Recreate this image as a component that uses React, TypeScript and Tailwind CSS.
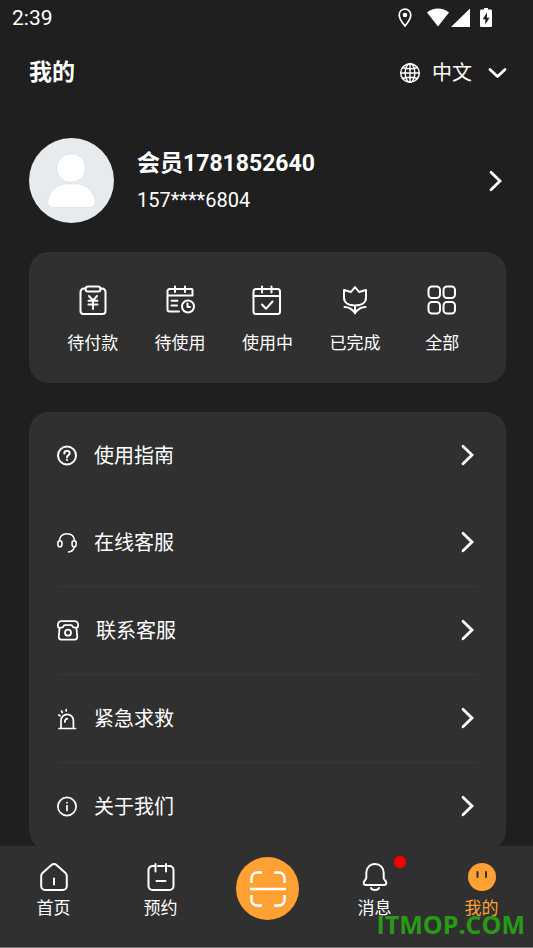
import type { ReactNode } from 'react';

const stroke = {
  fill: 'none',
  stroke: 'currentColor',
  strokeWidth: 2,
  strokeLinecap: 'round' as const,
  strokeLinejoin: 'round' as const,
  'aria-hidden': true,
};

function Chevron() {
  return (
    <svg {...stroke} width="14" height="22" viewBox="0 0 14 22" strokeWidth={2.8} strokeLinejoin="miter">
      <path d="M2 2.200 11 11l-9 8.800" />
    </svg>
  );
}

function StatusBar() {
  return (
    <div className="flex h-9 items-center justify-between pl-3 pr-[41px] text-white">
      <span className="text-[21px] leading-6">2:39</span>
      <div className="flex items-center" aria-hidden="true">
        <svg width="16" height="20" viewBox="0 0 16 20" className="mr-3.5">
          <path d="M8 1.2c-3.3 0-5.8 2.5-5.8 5.8 0 4.1 5.8 11 5.8 11s5.8-6.900 5.800-11c0-3.300-2.500-5.800-5.800-5.800Z" fill="none" stroke="#fff" strokeWidth="1.700" />
          <circle cx="8" cy="7" r="2.300" fill="#fff" />
        </svg>
        <svg width="22" height="20" viewBox="0 0 22 20" className="mr-0.5">
          <path d="M11 18.500 0 4.500C3 2 7 .5 11 .5S19 2 22 4.500Z" fill="#fff" />
        </svg>
        <svg width="19" height="20" viewBox="0 0 19 20" className="mr-2.5">
          <path d="M19 .5v18.500H0Z" fill="#fff" />
        </svg>
        <svg width="12" height="20" viewBox="0 0 12 20">
          <path d="M4 0h4v1.500h2.500c.8 0 1.500.6 1.500 1.400v14.500c0 .9-.6 1.600-1.500 1.600h-9C.6 19 0 18.300 0 17.400V2.900C0 2.100.7 1.500 1.500 1.500H4Z" fill="#fff" />
          <path d="M6.900 4.500 2.700 11.300h2.600v5.200l4.200-6.800H6.900Z" fill="#1f1f1f" />
        </svg>
      </div>
    </div>
  );
}

function GlobeIcon() {
  return (
    <svg {...stroke} width="22" height="22" viewBox="0 0 22 22" strokeWidth={1.4}>
      <circle cx="11" cy="11" r="9.300" />
      <ellipse cx="11" cy="11" rx="4.800" ry="9.300" />
      <path d="M11 1.700v18.600M1.700 11h18.600M3.500 5.500c4.500 1.500 10.500 1.500 15 0M3.500 16.500c4.500-1.500 10.500-1.500 15 0" />
    </svg>
  );
}

function Avatar() {
  return (
    <svg width="85" height="85" viewBox="0 0 85 85" role="img" aria-label="头像" className="shrink-0">
      <circle cx="42.500" cy="42.500" r="42.500" fill="#e7ebee" />
      <g fill="#fff" stroke="#d8dadb" strokeWidth="0.600">
        <circle cx="42" cy="30" r="14.300" />
        <path d="M36 46h13c9 1 16 8 17 16.500.6 5-1.500 7-6 7H25c-4.500 0-6.500-2-6-7C20 54 27 47 36 46Z" />
      </g>
    </svg>
  );
}

const orders: { label: string; icon: ReactNode }[] = [
  {
    label: '待付款',
    icon: (
      <>
        <path d="M8.500 3.500H7a3.500 3.500 0 0 0-3.500 3.500v19a3 3 0 0 0 3 3h19a3 3 0 0 0 3-3V7A3.500 3.500 0 0 0 25 3.500h-1.500" />
        <rect x="8.500" y="1.500" width="15" height="5" rx="2.500" />
        <path d="m12 11 4 4.500 4-4.500M11.500 15.800h9M11.500 19.500h9M16 15.500V24" />
      </>
    ),
  },
  {
    label: '待使用',
    icon: (
      <>
        <path d="M15 26.500H5.500a2 2 0 0 1-2-2V6a2 2 0 0 1 2-2h22a1 1 0 0 1 1 1v5.500h-25M11 1.500v5.500M21 1.500v5.500M7.500 15.800h6M7.500 20.500H13" />
        <circle cx="24" cy="21.500" r="6" />
        <path d="M23.500 18.500V22H26" />
      </>
    ),
  },
  {
    label: '使用中',
    icon: (
      <>
        <rect x="2.500" y="4" width="26.500" height="25" rx="2.500" />
        <path d="M2.500 11H29M11 1.500v6M20.500 1.500v6M11 19.500l4 4.300 6.500-7.300" />
      </>
    ),
  },
  {
    label: '已完成',
    icon: (
      <>
        <path d="m16 2 4 5 7-2v7.500C27 18 22 20.500 16 20.500S5 18 5 12.500V5l7 2ZM16 20.500V28.500M5.500 22c4.500 0 8 2.500 10.500 6 2.500-3.500 6-6 10.500-6" />
      </>
    ),
  },
  {
    label: '全部',
    icon: (
      <>
        <rect x="2.500" y="1.500" width="11.500" height="11.500" rx="3.500" />
        <rect x="17.500" y="1.500" width="11.500" height="11.500" rx="3.500" />
        <rect x="2.500" y="17" width="11.500" height="11.500" rx="3.500" />
        <rect x="17.500" y="17" width="11.500" height="11.500" rx="3.500" />
      </>
    ),
  },
];

const menu: { label: string; divided: boolean; icon: ReactNode }[] = [
  {
    label: '使用指南',
    divided: false,
    icon: (
      <svg {...stroke} width="20" height="22" viewBox="0 0 20 22">
        <circle cx="10" cy="10.500" r="9" />
        <path d="M7.300 8.500c0-3.500 5.400-3.500 5.400-.3 0 2-2.700 2-2.700 4M10 14.800v.3" />
      </svg>
    ),
  },
  {
    label: '在线客服',
    divided: false,
    icon: (
      <svg {...stroke} width="20" height="22" viewBox="0 0 20 22" strokeWidth={1.600}>
        <path d="M2.300 9C2.800 4.300 6 1.800 10 1.800S17.200 4.300 17.700 9" />
        <rect x="0.900" y="8.800" width="4" height="6" rx="2" />
        <rect x="15.100" y="8.800" width="4" height="6" rx="2" />
        <path d="M17.500 14.800c-.8 3.200-3 5-6 5.200" />
      </svg>
    ),
  },
  {
    label: '联系客服',
    divided: true,
    icon: (
      <svg {...stroke} width="22" height="22" viewBox="0 0 22 22" strokeWidth={1.800}>
        <path d="M4.500 1.200h13c2 0 3.600 1.500 3.600 3.500v1.500c0 1-.6 1.500-1.500 1.500h-2.200c-1.300 0-1.700-.8-2.200-1.800-.2-.4-.5-.7-1-.7H7.800c-.5 0-.8.3-1 .7C6.300 6.900 5.900 7.700 4.600 7.700H2.400C1.500 7.700.9 7.200.9 6.200V4.700c0-2 1.600-3.500 3.600-3.500ZM2.500 8.200l-.7 8.500c-.1 2 .7 3 2.700 3h13c2 0 2.800-1 2.700-3l-.7-8.500" />
        <circle cx="11" cy="12.700" r="3" />
      </svg>
    ),
  },
  {
    label: '紧急求救',
    divided: true,
    icon: (
      <svg {...stroke} width="20" height="22" viewBox="0 0 20 22" strokeWidth={1.700}>
        <path d="M4 20.500v-8a6.200 6.200 0 0 1 12.400 0v8M2 20.500h16.500M7.800 14c0-2 .8-3 2.500-3.400M1.800 7l1.200.8M4.500 3l.8 1.500M9.200 1.500v1.500" />
      </svg>
    ),
  },
  {
    label: '关于我们',
    divided: true,
    icon: (
      <svg {...stroke} width="20" height="22" viewBox="0 0 20 22" strokeWidth={1.700}>
        <circle cx="10" cy="10.500" r="9.100" />
        <path d="M10 9.500v5M10 6.500v.2" />
      </svg>
    ),
  },
];

function NavItem({ label, active = false, badge = false, children }: { label: string; active?: boolean; badge?: boolean; children: ReactNode }) {
  return (
    <a href="#" aria-current={active ? 'page' : undefined} className={`relative flex flex-col items-center pt-4 text-[17px] leading-6 ${active ? 'text-[#ffa033]' : 'text-white'}`}>
      <svg {...stroke} width="30" height="30" viewBox="0 0 30 30">
        {children}
      </svg>
      <span className="mt-1">{label}</span>
      {badge && <span className="absolute left-1/2 top-2.5 ml-[19px] size-3 rounded-full bg-[#ff0000]" />}
    </a>
  );
}

export default function App() {
  return (
    <div className="relative flex h-screen flex-col overflow-hidden bg-[#1f1f1f] font-[Roboto,'Noto_Sans_CJK_SC',sans-serif] text-white">
      <StatusBar />
      <main className="min-h-0 flex-1 overflow-y-auto pl-[29px] pr-[27px] [scrollbar-width:none]">
        <header className="flex h-[74px] items-center justify-between">
          <h1 className="text-[23px] font-bold leading-8">我的</h1>
          <button type="button" className="-mr-px flex items-center text-[20px] leading-8">
            <GlobeIcon />
            <span className="ml-[11px] mr-4">中文</span>
            <svg {...stroke} width="19" height="12" viewBox="0 0 19 12" strokeWidth={2.800}>
              <path d="m2 2.500 7.500 7 7.500-7" />
            </svg>
          </button>
        </header>

        <button type="button" className="mt-7 flex h-[85px] w-full items-center pr-[3px] text-left">
          <Avatar />
          <span className="ml-[23px] flex flex-1 flex-col gap-1.5">
            <span className="text-[23px] font-bold leading-8">会员1781852640</span>
            <span className="text-[20px] leading-7">157****6804</span>
          </span>
          <Chevron />
        </button>

        <section className="mt-[29px] grid grid-cols-5 rounded-[20px] bg-[#303030] px-5 pb-7 pt-[33px]">
          {orders.map((o) => (
            <a key={o.label} href="#" className="flex flex-col items-center gap-3.5 text-[17px] leading-6">
              <svg {...stroke} width="32" height="32" viewBox="0 0 32 32">
                {o.icon}
              </svg>
              {o.label}
            </a>
          ))}
        </section>

        <ul className="mt-[29px] rounded-[20px] bg-[#303030] px-7">
          {menu.map((m) => (
            <li key={m.label} className={m.divided ? 'border-t border-[#383838]' : ''}>
              <a href="#" className="flex h-[87px] items-center pr-[3px] text-[20px] leading-8">
                {m.icon}
                <span className="ml-[17px] flex-1">{m.label}</span>
                <span className="pb-0.5">
                  <Chevron />
                </span>
              </a>
            </li>
          ))}
        </ul>
      </main>

      <nav className="-mr-0.5 grid h-[102px] shrink-0 grid-cols-5 border-b border-[#777777] bg-[#303030]">
        <NavItem label="首页">
          <path d="M3.500 11 12.500 3a3.500 3.500 0 0 1 5 0l9 8c1 .9 1.300 1.700 1.300 3v10a4 4 0 0 1-4 4H6.200a4 4 0 0 1-4-4V14c0-1.300.3-2.100 1.300-3ZM15 16.500v6" />
        </NavItem>
        <NavItem label="预约">
          <path d="M8 4H6.500a4 4 0 0 0-4 4v16a4 4 0 0 0 4 4h17a4 4 0 0 0 4-4V8a4 4 0 0 0-4-4H22M12 4h6M9.500 2v7.500M20 2v7.500M10.500 19h9" />
        </NavItem>
        <button type="button" aria-label="扫码" className="mt-[11px] grid size-[63px] place-items-center justify-self-center rounded-full bg-[#ffa033]">
          <svg {...stroke} width="36" height="36" viewBox="0 0 36 36" strokeWidth={2.500} strokeLinecap="butt">
            <path d="M1.500 12V7A5.500 5.500 0 0 1 7 1.500h5M24 1.500h5A5.500 5.500 0 0 1 34.500 7v5M34.500 24v5a5.500 5.500 0 0 1-5.500 5.500h-5M12 34.500H7A5.500 5.500 0 0 1 1.500 29v-5M0 18h36" />
          </svg>
        </button>
        <NavItem label="消息" badge>
          <path d="M15 2c-5.300 0-8.700 4-8.700 9v5c0 1.500-2.600 3-2.600 4.800 0 1.500 1 2.200 2.300 2.200h18c1.300 0 2.300-.7 2.300-2.200 0-1.800-2.600-3.300-2.600-4.800v-5c0-5-3.400-9-8.700-9ZM11 26c1 2.800 7 2.800 8 0" />
        </NavItem>
        <NavItem label="我的" active>
          <circle cx="15" cy="15" r="14" fill="#ffa033" stroke="none" />
          <path d="M10.500 10v5M19 10v5" stroke="#303030" />
        </NavItem>
      </nav>

      <span className="pointer-events-none absolute bottom-2 right-2 font-['Open_Sans',sans-serif] text-[25px] font-bold leading-8 text-[#299a15]">ITMOP.COM</span>
    </div>
  );
}
